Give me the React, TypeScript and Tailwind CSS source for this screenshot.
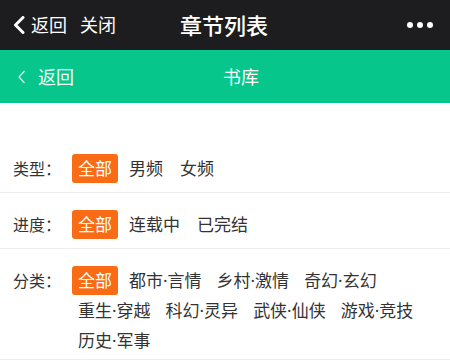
import React, { useState } from "react";

const FONT = {
  fontFamily:
    '"Noto Sans", "Noto Sans CJK SC", "Liberation Sans", sans-serif',
};

type TFilterRow = {
  label: string;
  options: string[];
  last?: boolean;
};

const rows: TFilterRow[] = [
  { label: "类型：", options: ["全部", "男频", "女频"] },
  { label: "进度：", options: ["全部", "连载中", "已完结"] },
  {
    label: "分类：",
    options: [
      "全部",
      "都市·言情",
      "乡村·激情",
      "奇幻·玄幻",
      "重生·穿越",
      "科幻·灵异",
      "武侠·仙侠",
      "游戏·竞技",
      "历史·军事",
    ],
    last: true,
  },
];

const FilterRow = ({ label, options, last }: TFilterRow) => {
  const [active, setActive] = useState(0);
  const short = options.length === 3;

  return (
    <div
      className={`flex border-b border-[#eeeeee] pt-[17px] ${
        last ? "pb-[4px]" : "pb-[9px]"
      }`}
    >
      <div className="w-[72px] flex-shrink-0 pl-[13px] h-[29px] flex items-center text-[16px] text-[#333]">
        {label}
      </div>
      <div className="flex flex-wrap gap-x-[3px] gap-y-[1px] pr-2">
        {options.map((o, index) => (
          <button
            key={o}
            type="button"
            onClick={() => setActive(index)}
            className={`h-[29px] px-[6px] rounded-[3px] text-[17px] leading-none flex items-center ${
              active === index ? "bg-[#f96b14] text-white" : "text-[#333]"
            } ${index === 0 ? "mr-[2px]" : ""} ${
              index === 1 && short ? "mr-[2px]" : ""
            }`}
          >
            {o}
          </button>
        ))}
      </div>
    </div>
  );
};

const App = () => {
  return (
    <div className="w-[450px] h-[364px] bg-white overflow-hidden" style={FONT}>
      {/* wechat title bar */}
      <div className="h-[50px] bg-[#1d1d20] flex items-center text-white">
        <div className="flex items-center pl-[12px] w-[140px]">
          <svg width="15" height="18" viewBox="0 0 15 18" className="mr-[4px]">
            <polyline
              points="11,1.5 3.5,9 11,16.5"
              fill="none"
              stroke="white"
              strokeWidth="3"
              strokeLinecap="round"
              strokeLinejoin="round"
            />
          </svg>
          <span className="text-[18px] leading-none">返回</span>
          <span className="text-[18px] leading-none ml-[13px]">关闭</span>
        </div>
        <div className="flex-1 text-center text-[22px] font-medium leading-none">
          <span className="relative -left-[1px]">章节列表</span>
        </div>
        <div className="w-[140px] flex justify-end items-center gap-[4px] pr-[17px]">
          <span className="w-[6px] h-[6px] rounded-full bg-white" />
          <span className="w-[6px] h-[6px] rounded-full bg-white" />
          <span className="w-[6px] h-[6px] rounded-full bg-white" />
        </div>
      </div>

      {/* app header */}
      <div className="h-[53px] bg-[#07c68b] flex items-center text-white">
        <div className="w-[80px] flex items-center pl-[18px]">
          <svg width="8" height="14" viewBox="0 0 8 14" className="mr-[12px]">
            <polyline
              points="6.5,1 1,7 6.5,13"
              fill="none"
              stroke="#d8f6ea"
              strokeWidth="1.2"
            />
          </svg>
          <span className="text-[18px] leading-none text-[#f2fdf8]">返回</span>
        </div>
        <div className="flex-1 text-center text-[18px] leading-none">书库</div>
        <div className="w-[48px]" />
      </div>

      {/* filters */}
      <div className="pt-[34px]">
        {rows.map((r) => (
          <FilterRow key={r.label} {...r} />
        ))}
      </div>
    </div>
  );
};

export default App;
